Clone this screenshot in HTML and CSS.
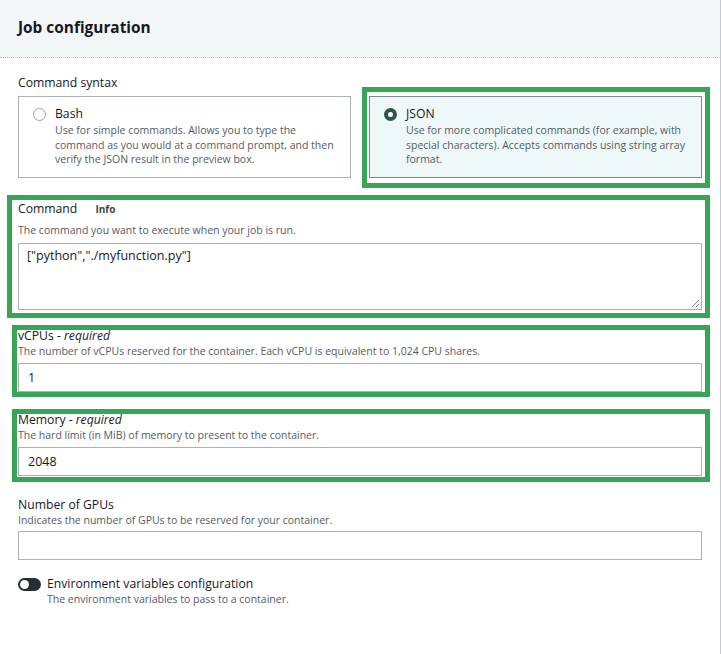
FILE: index.html
```html
<!DOCTYPE html>
<html lang="en">
<head>
<meta charset="utf-8">
<title>Job configuration</title>
<link rel="stylesheet" href="styles.css">
</head>
<body>
<div class="panel">
  <div class="header"><h2 class="title">Job configuration</h2></div>
  <div class="body">
    <div class="field-label syntax-label">Command syntax</div>
    <div class="cards">
      <label class="card">
        <span class="radio"></span>
        <span class="card-text">
          <span class="card-title">Bash</span>
          <span class="card-desc">Use for simple commands. Allows you to type the command as you would at a command prompt, and then verify the JSON result in the preview box.</span>
        </span>
      </label>
      <label class="card card-selected hl hl-json">
        <span class="radio radio-on"></span>
        <span class="card-text">
          <span class="card-title">JSON</span>
          <span class="card-desc">Use for more complicated commands (for example, with special characters). Accepts commands using string array format.</span>
        </span>
      </label>
    </div>

    <div class="field field-command hl hl-command">
      <div class="field-label">Command <span class="info">Info</span></div>
      <div class="field-desc">The command you want to execute when your job is run.</div>
      <div class="textarea">["python","./myfunction.py"]<span class="grip"></span></div>
    </div>

    <div class="field field-vcpu hl hl-vcpu">
      <div class="field-label">vCPUs - <i>required</i></div>
      <div class="field-desc">The number of vCPUs reserved for the container. Each vCPU is equivalent to 1,024 CPU shares.</div>
      <div class="input">1</div>
    </div>

    <div class="field field-mem hl hl-mem">
      <div class="field-label">Memory - <i>required</i></div>
      <div class="field-desc">The hard limit (in MiB) of memory to present to the container.</div>
      <div class="input">2048</div>
    </div>

    <div class="field field-gpu">
      <div class="field-label">Number of GPUs</div>
      <div class="field-desc">Indicates the number of GPUs to be reserved for your container.</div>
      <div class="input"></div>
    </div>

    <div class="toggle-row">
      <span class="toggle"><span class="knob"></span></span>
      <div>
        <div class="toggle-label">Environment variables configuration</div>
        <div class="field-desc">The environment variables to pass to a container.</div>
      </div>
    </div>
  </div>
</div>
</body>
</html>
```

FILE: styles.css
```css
* { box-sizing: border-box; }
html, body { margin: 0; padding: 0; background: #fff; }
body {
  font-family: "Open Sans", "Noto Sans", sans-serif;
  color: #16191f;
}
.panel {
  width: 721px;
  height: 654px;
  border-right: 1px solid #c6cbce;
}
.header {
  height: 58px;
  background: #f3f6f7;
  border-bottom: 1px dotted #b9bec1;
  padding: 0 18px 3px;
  display: flex;
  align-items: center;
}
.title {
  margin: 0;
  font-size: 15.4px;
  font-weight: 700;
  color: #16191f;
}
.body {
  padding: 0 18px;
}
.field-label {
  font-size: 12.2px;
  line-height: 17px;
  color: #16191f;
}
.syntax-label { margin-top: 16px; }
.info {
  font-size: 10px;
  font-weight: 700;
  color: #444;
  margin-left: 15px;
}
.field-desc {
  font-size: 10.5px;
  line-height: 15px;
  color: #545b64;
}
.cards {
  display: grid;
  grid-template-columns: 1fr 1fr;
  gap: 18px;
  margin-top: 5px;
}
.card {
  display: flex;
  gap: 9px;
  height: 82px;
  border: 1px solid #aab1b5;
  padding: 8px 14px 0 14px;
  background: #fff;
}
.card-selected {
  background: #eef8f9;
  border-color: #7d878c;
}
.card-text { display: flex; flex-direction: column; }
.card-title { font-size: 12.2px; line-height: 17px; }
.card-desc {
  font-size: 10.5px;
  line-height: 14.5px;
  color: #545b64;
  margin-top: 1px;
}
.radio {
  width: 13px;
  height: 13px;
  border-radius: 50%;
  border: 1px solid #9aa4a8;
  margin-top: 3px;
  flex: none;
  background: #fff;
}
.radio-on {
  border: 4px solid #2f5546;
}
.hl { position: relative; }
.hl::after {
  content: "";
  position: absolute;
  border: 5px solid #37a557;
  pointer-events: none;
}
.hl-json::after { inset: -10px -9px -11px -8px; }
.hl-command::after { inset: -2px -8px -8px -11px; }
.hl-vcpu::after { inset: -2px -8px -5px -6px; }
.hl-mem::after { inset: -2px -8px -6px -6px; }

.field-command { margin-top: 19px; padding-top: 3px; }
.textarea {
  position: relative;
  margin-top: 5px;
  height: 67px;
  border: 1px solid #aab1b5;
  padding: 3px 8px;
  font-size: 12.5px;
  line-height: 18px;
  color: #16191f;
}
.grip {
  position: absolute;
  right: 2px;
  bottom: 2px;
  width: 7px;
  height: 7px;
  background: linear-gradient(135deg, transparent 45%, #888 45%, #888 55%, transparent 55%, transparent 75%, #888 75%, #888 85%, transparent 85%);
}
.input {
  height: 29px;
  border: 1px solid #aab1b5;
  padding: 0 9px;
  font-size: 12.5px;
  line-height: 27px;
  color: #16191f;
  margin-top: 4px;
}
.field-vcpu { margin-top: 17px; }
.field-mem { margin-top: 19px; }
.field-gpu { margin-top: 20px; }
.field .field-desc { margin-top: 0; }
.field-command .field-desc { margin-top: 5px; }
.field-gpu .input { margin-top: 3px; }

.toggle-row {
  display: flex;
  gap: 6px;
  margin-top: 15px;
}
.toggle {
  width: 23px;
  height: 13px;
  border-radius: 7px;
  background: #2a2d30;
  margin-top: 3px;
  position: relative;
  flex: none;
}
.knob {
  position: absolute;
  left: 2px;
  top: 2px;
  width: 9px;
  height: 9px;
  border-radius: 50%;
  background: #fff;
}
.toggle-label { font-size: 12.2px; line-height: 17px; }
```
